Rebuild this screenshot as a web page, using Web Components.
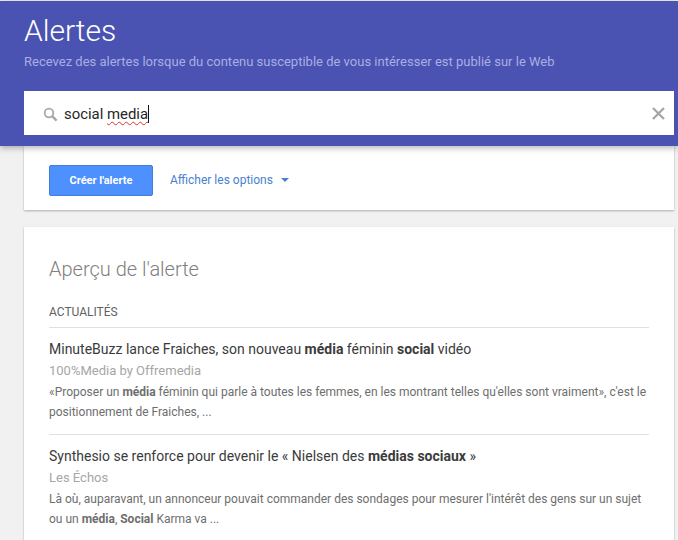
<!DOCTYPE html>
<html lang="fr"><head><meta charset="utf-8"><title>Alertes</title>
<style>
html,body{margin:0;padding:0;height:540px;overflow:hidden;background:#f1f1f1;font-family:Roboto,"Liberation Sans",sans-serif;}
</style></head><body>
<alert-page>
  <alert-header title-text="Alertes" subtitle="Recevez des alertes lorsque du contenu susceptible de vous intéresser est publié sur le Web">
    <alert-search></alert-search>
  </alert-header>
  <alert-options></alert-options>
  <alert-preview heading="Aperçu de l'alerte" section="ACTUALITÉS">
    <alert-item source="100%Media by Offremedia">
      <span slot="title">MinuteBuzz lance Fraiches, son nouveau <b>média</b> féminin <b>social</b> vidéo</span>
      <span slot="body">«Proposer un <b>média</b> féminin qui parle à toutes les femmes, en les montrant telles qu'elles sont vraiment», c'est le positionnement de Fraiches, ...</span>
    </alert-item>
    <alert-item source="Les Échos">
      <span slot="title">Synthesio se renforce pour devenir le « Nielsen des <b>médias sociaux</b> »</span>
      <span slot="body">Là où, auparavant, un annonceur pouvait commander des sondages pour mesurer l'intérêt des gens sur un sujet ou un <b>média</b>, <b>Social</b> Karma va ...</span>
    </alert-item>
  </alert-preview>
</alert-page>
<script>
function def(name,html,init){
  customElements.define(name,class extends HTMLElement{
    constructor(){super();this.attachShadow({mode:'open'}).innerHTML=html;}
    connectedCallback(){if(init)init(this,this.shadowRoot);}
  });
}
def('alert-page',`<style>:host{display:flex;flex-direction:column;height:540px;box-sizing:border-box;padding-top:1px;overflow:hidden;}</style><slot></slot>`);
def('alert-header',`<style>
:host{display:block;flex:none;position:relative;z-index:2;height:145px;box-sizing:border-box;background:#4a53b1;padding:0 4px 0 24px;box-shadow:0 2px 6px rgba(0,0,0,.3);}
h1{margin:0;padding-top:12px;font:300 30px/35px Roboto,sans-serif;color:#fff;}
p{margin:0;padding-top:6px;font:400 13px/15px Roboto,sans-serif;color:#a9aee3;height:22px;padding-bottom:15px;}
</style><h1></h1><p></p><slot></slot>`,(el,s)=>{
  s.querySelector('h1').textContent=el.getAttribute('title-text');
  s.querySelector('p').textContent=el.getAttribute('subtitle');
});
def('alert-search',`<style>
:host{display:flex;align-items:center;height:44px;box-sizing:border-box;padding:2px 9px 0 19px;background:#fff;}
svg.s{width:15px;height:15px;flex:none;margin-right:6px;}
.t{flex:1;font:400 14.9px/20px Roboto,sans-serif;color:#262626;display:flex;align-items:center;}
.m{text-decoration:underline wavy #d33;text-decoration-thickness:1px;text-underline-offset:2px;}
.c{display:block;width:1px;height:18px;background:#111;}
svg.x{width:13px;height:13px;flex:none;margin-top:-2px;}
</style>
<svg class="s" viewBox="0 0 15 15"><circle cx="6" cy="6" r="4.3" fill="none" stroke="#a8a8a8" stroke-width="1.8"/><path d="M9.2 9.2L13.6 13.6" stroke="#a8a8a8" stroke-width="2.4" fill="none"/></svg>
<div class="t"><span>social&nbsp;</span><span class="m">media</span><span class="c"></span></div>
<svg class="x" viewBox="0 0 13 13"><path d="M1 1L12 12M12 1L1 12" stroke="#a6a6a6" stroke-width="2.3" fill="none"/></svg>`);
def('alert-options',`<style>
:host{display:flex;flex:none;align-items:center;height:64px;box-sizing:border-box;margin:0 4px 17px 24px;background:#fff;padding:4px 25px 0;box-shadow:0 1px 2px rgba(0,0,0,.28);}
.b{width:104px;height:31px;box-sizing:border-box;background:#4d90fe;border:1px solid #3f7fdc;border-radius:2px;color:#fff;font:700 11px/29px Roboto,sans-serif;text-align:center;}
a{margin-left:17px;font:400 12px/16px Roboto,sans-serif;color:#4a7fd0;}
i{display:block;margin-left:8px;width:0;height:0;border:4px solid transparent;border-top:4.5px solid #4a7fd0;border-bottom:0;}
</style><div class="b">Créer l'alerte</div><a>Afficher les options</a><i></i>`);
def('alert-preview',`<style>
:host{display:block;flex:1;min-height:0;overflow:hidden;margin:0 4px 0 24px;background:#fff;padding:28px 25px 0;box-shadow:0 1px 2px rgba(0,0,0,.28);box-sizing:border-box;}
h2{margin:0;font:300 20px/28px Roboto,sans-serif;color:#808080;}
h3{margin:0;padding-top:17px;height:24px;padding-bottom:3px;font:400 12px/24px Roboto,sans-serif;color:#616161;border-bottom:1px solid #e0e0e0;}
</style><h2></h2><h3></h3><slot></slot>`,(el,s)=>{
  s.querySelector('h2').textContent=el.getAttribute('heading');
  s.querySelector('h3').textContent=el.getAttribute('section');
});
def('alert-item',`<style>
:host{display:block;padding:10px 0 12px;border-bottom:1px solid #e0e0e0;}
.t{font:400 14px/22px Roboto,sans-serif;color:#3b3b3b;}
.s{font:400 13px/21px Roboto,sans-serif;color:#a6a6a6;margin-bottom:1px;}
.b{font:400 12px/20px Roboto,sans-serif;color:#6e6e6e;}
::slotted(span){display:block;}
</style><div class="t"><slot name="title"></slot></div><div class="s"></div><div class="b"><slot name="body"></slot></div>`,(el,s)=>{
  s.querySelector('.s').textContent=el.getAttribute('source');
});
</script>
</body></html>
